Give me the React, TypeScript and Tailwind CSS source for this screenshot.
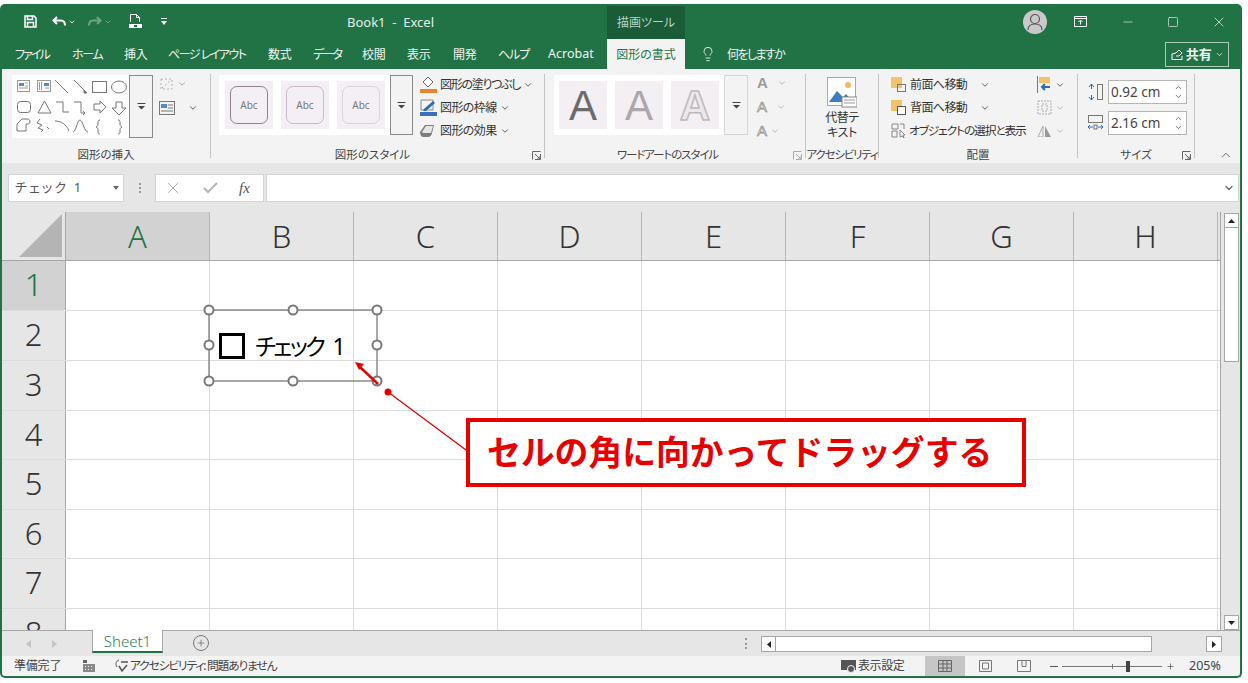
import type { ReactNode } from "react";
import { ChevronDown, ChevronUp, Lightbulb, Minus, Plus, Square, X } from "lucide-react";

const UI_FONT = "font-['Noto_Sans','Noto_Sans_CJK_JP',sans-serif] [font-feature-settings:'palt']";

const TABS = [
  { label: "ファイル", w: "w-[57px] tracking-[-1.9px]" },
  { label: "ホーム", w: "w-[52px] tracking-[-1.4px]" },
  { label: "挿入", w: "w-[44px] tracking-[-0.2px]" },
  { label: "ページ レイアウト", w: "w-[100px] tracking-[-1.500px]" },
  { label: "数式", w: "w-[45px] tracking-[-0.2px]" },
  { label: "データ", w: "w-[49px] tracking-[-1.7px]" },
  { label: "校閲", w: "w-[45px] tracking-[-0.2px]" },
  { label: "表示", w: "w-[46px] tracking-[-0.2px]" },
  { label: "開発", w: "w-[45px] tracking-[-0.2px]" },
  { label: "ヘルプ", w: "w-[50px] tracking-[-1.1px]" },
  { label: "Acrobat", w: "w-[59px] text-[12.500px]" },
];

const COLUMNS = ["B", "C", "D", "E", "F", "G", "H"];
const ROWS = [
  { n: "1", h: "h-[50px]" },
  { n: "2", h: "h-[50px]" },
  { n: "3", h: "h-[50px]" },
  { n: "4", h: "h-[49px]" },
  { n: "5", h: "h-[50px]" },
  { n: "6", h: "h-[49px]" },
  { n: "7", h: "h-[50px]" },
  { n: "8", h: "h-[50px]" },
];

function Caret({ className = "" }: { className?: string }) {
  return <ChevronDown className={`h-[10px] w-[10px] text-[#444] ${className}`} strokeWidth={2} />;
}

function MoreButton({ className }: { className: string }) {
  return (
    <div className={`flex items-center justify-center ${className}`}>
      <svg width="9" height="7" viewBox="0 0 9 7">
        <path d="M0.5 0.5h8" stroke="#444" />
        <path d="M1 3h7L4.500 6.500z" fill="#444" />
      </svg>
    </div>
  );
}

function Launcher({ dim }: { dim?: boolean }) {
  return (
    <svg className={`absolute bottom-[3px] right-[3px] ${dim ? "opacity-50" : ""}`} width="9" height="9" viewBox="0 0 9 9" fill="none" stroke="#666">
      <path d="M0.500 8.500v-8h8M8.500 3v5.500H3M3 3l5 5M5 8h3V5" />
    </svg>
  );
}

function Group({ w, label, labelClass = "", launcher, dim, children }: { w: string; label: string; labelClass?: string; launcher?: boolean; dim?: boolean; children: ReactNode }) {
  return (
    <div className={`relative flex shrink-0 flex-col ${w}`}>
      <div className="flex h-[76px]">{children}</div>
      <div className={`mt-[2px] whitespace-nowrap text-center text-[11.500px] leading-[16px] text-[#444] ${labelClass}`}>{label}</div>
      {launcher && <Launcher dim={dim} />}
    </div>
  );
}

function Sep() {
  return <div className="mb-[5px] mt-[5px] w-px shrink-0 bg-[#c4c4c4]" />;
}

function ShapeGallery() {
  return (
    <svg className="shrink-0" width="117" height="63" viewBox="0 0 117 63" fill="none" stroke="#777" strokeWidth="1">
      <rect x="5.500" y="5.500" width="12" height="11" stroke="#999" />
      <path d="M7 8h5v3H7z" fill="#4f8ccc" stroke="none" />
      <path d="M13 8h3M13 11h3M7 13h9" stroke="#999" />
      <rect x="25.500" y="5.500" width="13" height="11" stroke="#999" />
      <path d="M32 8h5v3h-5z" fill="#4f8ccc" stroke="none" />
      <path d="M27.500 7v8M29.500 7v8M33 13h4" stroke="#999" />
      <path d="M43 5l13 13" />
      <path d="M62 5l12 12" />
      <path d="M72 15l3 3-3 0z" fill="#555" />
      <rect x="80.500" y="6.500" width="14" height="11" />
      <ellipse cx="107" cy="12" rx="7.500" ry="6" />
      <rect x="5.500" y="26.500" width="13" height="11" rx="3" />
      <path d="M26 38l6.500-12L39 38z" />
      <path d="M44 27h7v10h6" />
      <path d="M62 27h7v11h4M71 36l2 2-2 2" />
      <path d="M82 29h6v-3l6 6-6 6v-3h-6z" />
      <path d="M104 27h6v6h4l-7 7-7-7h4z" />
      <path d="M5 56v-7l5-5h5c2 0 3 1 3 3s-2 2-4 2v7z" />
      <path d="M28 44l-3 4 5 2-4 3 5 2-2 2M35 52l2 2" />
      <path d="M43 46c6 0 11 3 14 10" />
      <path d="M61 57c3 0 4-12 7-12s4 12 8 12" />
      <path d="M88 45c-2 0-2 1-2 3s0 3-2 4c2 1 2 2 2 4s0 3 2 3" />
      <path d="M106 45c2 0 2 1 2 3s0 3 2 4c-2 1-2 2-2 4s0 3-2 3" />
    </svg>
  );
}

function StyleSwatch({ border }: { border: string }) {
  return (
    <div className="flex h-[48px] w-[48px] items-center justify-center bg-[#f4eff4]">
      <div className={`flex h-[38px] w-[38px] items-center justify-center rounded-[7px] border-[1.500px] text-[10px] text-[#777] ${border}`}>
        Abc
      </div>
    </div>
  );
}

function ListItem({ icon, label, tracking = "tracking-[-0.6px]" }: { icon: ReactNode; label: string; tracking?: string }) {
  return (
    <div className="flex h-[23px] items-center">
      <div className="flex w-[20px] shrink-0 items-center">{icon}</div>
      <span className={`text-[12px] text-[#333] ${tracking}`}>{label}</span>
      <Caret className="ml-[3px]" />
    </div>
  );
}

function SpinBox({ value }: { value: string }) {
  return (
    <div className="flex h-[24px] w-[79px] items-center border border-[#b5b5b5] bg-white pl-[2px] text-[13.500px] text-[#444]">
      <span className="flex-1">{value}</span>
      <div className="flex w-[16px] flex-col items-center">
        <ChevronUp className="h-[9px] w-[9px] text-[#444]" strokeWidth={2} />
        <ChevronDown className="h-[9px] w-[9px] text-[#444]" strokeWidth={2} />
      </div>
    </div>
  );
}

function Ribbon() {
  return (
    <div className="flex h-[94px] shrink-0 bg-[#f3f3f3] text-[#444]">
      <Group w="w-[208px]" label="図形の挿入">
        <div className="ml-[10px] mt-[6px] flex h-[63px] w-[141px] bg-white">
          <ShapeGallery />
          <MoreButton className="w-[24px] border border-[#8a8a8a] bg-[#f3f3f3]" />
        </div>
        <div className="ml-[6px] mt-[6px] flex flex-col gap-[7px]">
          <div className="flex h-[17px] items-center gap-[2px] opacity-50">
            <svg width="16" height="15" viewBox="0 0 16 15" fill="none" stroke="#777" strokeDasharray="2 2">
              <path d="M2 3h11v10H2zM3 12l9-8" />
            </svg>
            <Caret />
          </div>
          <div className="flex h-[17px] items-center gap-[13px]">
            <svg width="16" height="14" viewBox="0 0 16 14" fill="none" stroke="#777">
              <rect x="0.500" y="0.500" width="15" height="13" />
              <path d="M2 3h6v4H2z" fill="#4f8ccc" stroke="none" />
              <path d="M9 4h5M9 7h5M2 10h12" />
            </svg>
            <Caret />
          </div>
        </div>
      </Group>
      <Sep />
      <Group w="w-[333px]" label="図形のスタイル" labelClass="pr-[10px]" launcher>
        <div className="ml-[8px] mt-[6px] flex h-[60px] w-[194px]">
          <div className="flex flex-1 items-center gap-[8px] bg-white pl-[6px]">
            <StyleSwatch border="border-[#8f8490]" />
            <StyleSwatch border="border-[#c9bdc9]" />
            <StyleSwatch border="border-[#dcd3dc]" />
          </div>
          <MoreButton className="w-[23px] border border-[#8a8a8a] bg-[#f3f3f3]" />
        </div>
        <div className="ml-[7px] mt-[4px] flex flex-col">
          <ListItem
            label="図形の塗りつぶし"
            tracking="tracking-[-1.3px]"
            icon={
              <svg width="17" height="17" viewBox="0 0 17 17" fill="none">
                <path d="M8 1l5 5-5 5-5-5z" fill="#fff" stroke="#666" />
                <rect x="0" y="13" width="17" height="4" fill="#e8842c" />
              </svg>
            }
          />
          <ListItem
            label="図形の枠線"
            icon={
              <svg width="17" height="17" viewBox="0 0 17 17" fill="none">
                <path d="M1 1h12v10H1z" stroke="#888" />
                <path d="M4 10l9-8 2 2-9 8H3z" fill="#2b6cb8" />
                <rect x="0" y="13" width="17" height="4" fill="#3a6fc0" />
              </svg>
            }
          />
          <ListItem
            label="図形の効果"
            icon={
              <svg width="15" height="13" viewBox="0 0 15 13">
                <path d="M0 8l5-7h9l-2 8c0 2-2 4-4 4H3c-2 0-3-3-3-5z" fill="#7d7d7d" />
                <path d="M2 8l4-6h7l-2 7H3z" fill="#e6e6e6" />
              </svg>
            }
          />
        </div>
      </Group>
      <Sep />
      <Group w="w-[260px]" label="ワードアートのスタイル" labelClass="pr-[15px] tracking-[-1.1px]" launcher dim>
        <div className="ml-[9px] mt-[6px] flex h-[60px] w-[194px]">
          <div className="flex w-[170px] items-center gap-[8px] bg-white pl-[5px]">
            <div className="flex h-[48px] w-[48px] items-center justify-center bg-[#f3eff3] font-['Liberation_Sans',sans-serif] text-[42px] text-[#6d6a6d]">A</div>
            <div className="flex h-[48px] w-[48px] items-center justify-center bg-[#f3eff3] font-['Liberation_Sans',sans-serif] text-[42px] text-[#aba7ab]">A</div>
            <div className="flex h-[48px] w-[48px] items-center justify-center bg-[#f3eff3] font-['Liberation_Sans',sans-serif] text-[42px] font-bold text-[#ece8ec] [-webkit-text-stroke:1.500px_#bdb9bd]">A</div>
          </div>
          <MoreButton className="w-[24px] border border-[#d6d6d6] bg-[#f3f3f3]" />
        </div>
        <div className="ml-[9px] mt-[2px] flex w-[30px] flex-col font-['Liberation_Sans',sans-serif]">
          <div className="flex h-[24px] items-center gap-[9px] text-[15px] font-bold text-[#9a9a9a]">A<Caret className="opacity-40" /></div>
          <div className="flex h-[24px] items-center gap-[9px] text-[15px] text-[#f3f3f3] [-webkit-text-stroke:0.700px_#8f8f8f]">A<Caret className="opacity-40" /></div>
          <div className="flex h-[24px] items-center gap-[3px] text-[15px] text-[#f3f3f3] [-webkit-text-stroke:0.700px_#8f8f8f]">A<Caret className="opacity-40" /></div>
        </div>
      </Group>
      <Sep />
      <Group w="w-[72px]" label="アクセシビリティ" labelClass="tracking-[-1.2px]">
        <div className="flex w-full flex-col items-center pt-[8px]">
          <svg width="30" height="31" viewBox="0 0 30 31" fill="none">
            <rect x="0.500" y="0.500" width="28" height="28" fill="#fff" stroke="#a8a8a8" />
            <circle cx="21" cy="8" r="3" fill="#f0b860" />
            <path d="M2 25l8-11 6 6 3-3 7 8z" fill="#3f7cc0" />
            <rect x="15" y="20" width="15" height="10" fill="#fff" stroke="#888" />
            <path d="M17 23h11M17 26h11" stroke="#999" />
          </svg>
          <div className="mt-[2px] text-center text-[12px] leading-[15px] tracking-[-0.4px] text-[#333]">代替テ<br />キスト</div>
        </div>
      </Group>
      <Sep />
      <Group w="w-[198px]" label="配置">
        <div className="ml-[12px] mt-[4px] flex flex-col">
          <div className="flex h-[23px] items-center">
            <svg width="17" height="16" viewBox="0 0 17 16" className="mr-[2px] shrink-0">
              <rect x="0" y="0" width="11" height="11" fill="#f4c26a" />
              <rect x="6.500" y="7.500" width="8" height="7" fill="none" stroke="#777" />
            </svg>
            <span className="w-[70px] text-[12px] tracking-[-0.6px] text-[#333]">前面へ移動</span>
            <Caret />
            <svg width="15" height="17" viewBox="0 0 15 17" className="ml-[47px] shrink-0">
              <path d="M0.500 0v17" stroke="#777" />
              <rect x="2" y="1" width="11" height="6" fill="#f4c26a" />
              <path d="M13 11H5M8 8l-3 3 3 3" stroke="#2b6cb8" strokeWidth="2" fill="none" />
            </svg>
            <Caret className="ml-[3px]" />
          </div>
          <div className="flex h-[23px] items-center">
            <svg width="17" height="16" viewBox="0 0 17 16" className="mr-[2px] shrink-0">
              <rect x="0" y="0" width="11" height="11" fill="#f4c26a" />
              <rect x="6.500" y="6.500" width="8" height="8" fill="#fff" stroke="#555" />
            </svg>
            <span className="w-[70px] text-[12px] tracking-[-0.6px] text-[#333]">背面へ移動</span>
            <Caret />
            <svg width="15" height="15" viewBox="0 0 15 15" fill="none" stroke="#aaa" strokeDasharray="2 1" className="ml-[47px] shrink-0">
              <path d="M1 1h13v13H1zM5 4h5v7H5z" />
            </svg>
            <Caret className="ml-[3px] opacity-40" />
          </div>
          <div className="flex h-[23px] items-center">
            <svg width="15" height="15" viewBox="0 0 15 15" fill="none" stroke="#888" className="mr-[3px] shrink-0">
              <path d="M1 1h6v5H1zM1 8h5v6H1zM9 1h4v5" />
              <path d="M9 7l5 5-2 0 1 3-2-2-2 1z" fill="#f3f3f3" />
            </svg>
            <span className="w-[116px] whitespace-nowrap text-[11.800px] tracking-[-1.2px] text-[#333]">オブジェクトの選択と表示</span>
            <svg width="15" height="12" viewBox="0 0 15 12" className="ml-[12px] shrink-0">
              <path d="M1 12l5-11v11z" fill="none" stroke="#aaa" />
              <path d="M8 12V1l6 11z" fill="#999" />
            </svg>
            <Caret className="ml-[3px] opacity-40" />
          </div>
        </div>
      </Group>
      <Sep />
      <Group w="w-[116px]" label="サイズ" launcher>
        <div className="ml-[10px] mt-[11px] flex flex-col gap-[7px]">
          <div className="flex items-center gap-[5px]">
            <svg width="15" height="16" viewBox="0 0 15 16" fill="none" className="shrink-0">
              <path d="M3.500 0v5M3.500 11v5M1 3l2.500-3L6 3M1 13l2.500 3L6 13" stroke="#2b6cb8" />
              <rect x="9.500" y="0.500" width="5" height="15" stroke="#777" />
            </svg>
            <SpinBox value="0.92 cm" />
          </div>
          <div className="flex items-center gap-[5px]">
            <svg width="15" height="16" viewBox="0 0 15 16" fill="none" className="shrink-0">
              <rect x="0.500" y="0.500" width="14" height="7" stroke="#777" />
              <path d="M0 12h5M10 12h5M2 10l-2 2 2 2M13 10l2 2-2 2" stroke="#2b6cb8" />
              <rect x="6" y="10" width="3" height="4" stroke="#777" />
            </svg>
            <SpinBox value="2.16 cm" />
          </div>
        </div>
      </Group>
      <Sep />
      <div className="flex flex-1 items-end justify-end pb-[1px] pr-[7px]">
        <ChevronUp className="h-[14px] w-[14px] text-[#555]" strokeWidth={1.500} />
      </div>
    </div>
  );
}

function TitleBar() {
  return (
    <div className="flex h-[35px] shrink-0 items-center text-white">
      <svg className="ml-[22px] shrink-0" width="13" height="13" viewBox="0 0 13 13" fill="none" stroke="#fff" strokeWidth="1.500">
        <path d="M1 1h9l2 2v9H1zM3.500 1v3.500h5V1M3.500 12V7.500h6V12" />
      </svg>
      <svg className="ml-[15px] shrink-0" width="14" height="11" viewBox="0 0 14 11" fill="none" stroke="#fff" strokeWidth="2">
        <path d="M5 1L1.500 4.500 5 8M2 4.500h7c2.500 0 4 1.500 4 5" />
      </svg>
      <ChevronDown className="ml-[2px] h-[8px] w-[8px]" strokeWidth={2.500} />
      <svg className="ml-[12px] shrink-0 opacity-35" width="14" height="11" viewBox="0 0 14 11" fill="none" stroke="#fff" strokeWidth="2">
        <path d="M9 1l3.500 3.500L9 8M12 4.500H5c-2.500 0-4 1.500-4 5" />
      </svg>
      <ChevronDown className="ml-[2px] h-[8px] w-[8px] opacity-35" strokeWidth={2.500} />
      <svg className="ml-[17px] shrink-0" width="13" height="15" viewBox="0 0 13 15" fill="none" stroke="#fff">
        <path d="M1.500 8V0.500h6l3 3V8M7.500 0.500v3h3" />
        <path d="M0 10h13v4H0z" fill="#fff" stroke="none" />
        <path d="M5 11h3v2H5z" fill="#217346" stroke="none" />
      </svg>
      <svg className="ml-[19px] shrink-0" width="6" height="7" viewBox="0 0 6 7" fill="#fff">
        <path d="M0 0h6v1H0zM0 3h6L3 7z" />
      </svg>
      <div className="ml-[180px] mt-[3px] w-[90px] whitespace-nowrap text-[13px] text-[#e6f0ea]">Book1&nbsp; -&nbsp; Excel</div>
      <div className="ml-[170px] flex h-[33px] w-[78px] items-center justify-center self-end bg-[#1a5c38] text-[12px] text-[#b9d3c4]">描画ツール</div>
      <div className="ml-[338px] flex h-[24px] w-[24px] shrink-0 items-center justify-center overflow-hidden rounded-full bg-[#c9c9c9]">
        <svg width="16" height="18" viewBox="0 0 16 18" fill="none" stroke="#555" strokeWidth="1.200">
          <circle cx="8" cy="6" r="4.500" />
          <path d="M1 17c0-4 3-6 7-6s7 2 7 6" />
        </svg>
      </div>
      <svg className="ml-[27px] shrink-0" width="13" height="11" viewBox="0 0 13 11" fill="none" stroke="#fff">
        <path d="M0.500 0.500h12v10H0.500zM0.500 2.500h12M6.500 8.500V4.500M4.500 6l2-2 2 2" />
      </svg>
      <Minus className="ml-[34px] h-[14px] w-[14px]" strokeWidth={1} />
      <Square className="ml-[32px] h-[12px] w-[12px]" strokeWidth={1.200} />
      <X className="ml-[32px] h-[16px] w-[16px]" strokeWidth={1} />
    </div>
  );
}

function TabBar() {
  return (
    <div className="flex h-[30px] shrink-0 items-center text-[12px] text-[#f0f5f2]">
      <div className="w-[13px]" />
      {TABS.map((t) => (
        <div key={t.label} className={`${t.w} mt-[1px] whitespace-nowrap`}>
          {t.label}
        </div>
      ))}
      <div className="flex h-full w-[78px] items-center justify-center bg-[#f3f3f3] pt-[1px] text-[#217346]">図形の書式</div>
      <Lightbulb className="ml-[15px] h-[16px] w-[16px]" strokeWidth={1.300} />
      <div className="ml-[11px] mt-[1px] tracking-[-1.6px]">何をしますか</div>
      <div className="ml-[381px] mt-[1px] flex h-[25px] w-[64px] items-center justify-center gap-[3px] border border-[#a9cbb8] text-[13px] font-bold">
        <svg width="12" height="11" viewBox="0 0 12 11" fill="none" stroke="#fff">
          <path d="M1 10.500V5l4-1 3-3 3 3-3 3H5M1 10.500h10V7" />
        </svg>
        共有
        <ChevronDown className="h-[9px] w-[9px]" strokeWidth={2} />
      </div>
    </div>
  );
}

function FormulaBar() {
  return (
    <div className="flex h-[49px] shrink-0 items-start bg-[#e6e6e6] pl-[6px] pt-[11px]">
      <div className="flex h-[28px] w-[116px] items-center border border-[#d4d4d4] bg-white pl-[6px] text-[13px] tracking-[2.2px] text-[#555]">
        <span className="flex-1">チェック 1</span>
        <svg className="mr-[4px]" width="6" height="4" viewBox="0 0 6 4" fill="#666"><path d="M0 0h6L3 4z" /></svg>
      </div>
      <div className="flex h-[28px] w-[31px] flex-col items-center justify-center gap-[2px]">
        <div className="h-[2px] w-[2px] bg-[#999]" />
        <div className="h-[2px] w-[2px] bg-[#999]" />
        <div className="h-[2px] w-[2px] bg-[#999]" />
      </div>
      <div className="flex h-[28px] w-[109px] items-center border border-[#d4d4d4] bg-white pl-[8px]">
        <X className="h-[18px] w-[18px] text-[#a8a8a8]" strokeWidth={1.300} />
        <svg className="ml-[21px]" width="15" height="12" viewBox="0 0 15 12" fill="none" stroke="#b5b5b5" strokeWidth="2">
          <path d="M1 6l4 4 9-9" />
        </svg>
        <span className="ml-[21px] font-['Liberation_Serif',serif] text-[15px] italic text-[#555]">fx</span>
      </div>
      <div className="ml-[2px] flex h-[28px] w-[973px] items-center justify-end border border-[#d4d4d4] bg-white pr-[3px]">
        <ChevronDown className="h-[12px] w-[12px] text-[#666]" strokeWidth={2.500} />
      </div>
    </div>
  );
}

function SheetGrid() {
  return (
    <div className="relative flex h-[418px] shrink-0 bg-[#e6e6e6]">
      <div className="flex h-full w-[1219px] shrink-0 flex-col overflow-hidden border-r border-[#a6a6a6] bg-white">
        <div className="flex h-[49px] shrink-0 border-b border-[#a6a6a6] bg-[#e6e6e6] font-['Noto_Sans',sans-serif] text-[31px] font-light text-[#333]">
          <div className="flex w-[64px] shrink-0 items-end justify-end border-r border-[#a6a6a6] pb-[3px] pr-[3px]">
            <div className="h-[43px] w-[43px] bg-[#b4b4b4] [clip-path:polygon(100%_0,100%_100%,0_100%)]" />
          </div>
          <div className="flex w-[144px] shrink-0 items-center justify-center border-r border-[#b5b5b5] bg-[#d2d2d2] text-[#217346]">A</div>
          {COLUMNS.map((c) => (
            <div key={c} className="flex w-[144px] shrink-0 items-center justify-center border-r border-[#b5b5b5]">
              {c}
            </div>
          ))}
        </div>
        {ROWS.map((r) => (
          <div key={r.n} className={`flex shrink-0 border-b border-[#dcdcdc] ${r.h}`}>
            <div
              className={`flex w-[64px] shrink-0 items-center justify-center border-r border-[#a6a6a6] pb-[2px] font-['Noto_Sans',sans-serif] text-[31px] font-light ${
                r.n === "1" ? "bg-[#d2d2d2] text-[#217346]" : "bg-[#e6e6e6] text-[#333]"
              }`}
            >
              {r.n}
            </div>
            <div className="w-[144px] shrink-0 border-r border-[#dcdcdc]" />
            {COLUMNS.map((c) => (
              <div key={c} className="w-[144px] shrink-0 border-r border-[#dcdcdc]" />
            ))}
          </div>
        ))}
      </div>
      <div className="ml-[3px] flex w-[15px] flex-col pt-[1px]">
        <div className="flex h-[15px] items-center justify-center border border-[#a6a6a6] bg-white">
          <svg width="7" height="4" viewBox="0 0 7 4"><path d="M0 4h7L3.500 0z" fill="#222" /></svg>
        </div>
        <div className="h-[134px] border-x border-b border-[#a6a6a6] bg-white" />
        <div className="flex-1" />
        <div className="flex h-[15px] items-center justify-center border border-[#a6a6a6] bg-white">
          <svg width="7" height="4" viewBox="0 0 7 4"><path d="M0 0h7L3.500 4z" fill="#222" /></svg>
        </div>
      </div>
    </div>
  );
}

function Overlays() {
  return (
    <>
      <svg className="absolute left-0 top-0" width="1242" height="678" viewBox="0 0 1242 678" fill="none">
        <rect x="209" y="310" width="168" height="71" stroke="#7a7a7a" strokeWidth="1.300" />
        {[
          [209, 310],
          [293, 310],
          [377, 310],
          [209, 345],
          [377, 345],
          [209, 381],
          [293, 381],
          [377, 381],
        ].map(([cx, cy]) => (
          <circle key={`${cx}-${cy}`} cx={cx} cy={cy} r="4.500" fill="#fff" stroke="#777" strokeWidth="2" />
        ))}
        <path d="M378 384L360 367" stroke="#e60000" strokeWidth="2.500" />
        <path d="M355 362l9 2-5 6z" fill="#e60000" />
        <circle cx="388" cy="392" r="3.500" fill="#e60000" />
        <path d="M388 392L466 450" stroke="#e60000" strokeWidth="1.300" />
      </svg>
      <div className="absolute left-[219px] top-[333px] h-[26px] w-[26px] border-[3px] border-black bg-white" />
      <div className="absolute left-[255px] top-[329px] whitespace-nowrap text-[23px] leading-[34px] tracking-[-2.600px] text-black [word-spacing:6px]">チェック 1</div>
      <div className="absolute left-[466px] top-[418px] flex h-[69px] w-[560px] items-center border-[4px] border-[#e60000] bg-white pl-[17px] text-[33.800px] font-bold leading-none text-[#e60000] [font-feature-settings:normal]">
        セルの角に向かってドラッグする
      </div>
    </>
  );
}

function SheetTabs() {
  return (
    <div className="flex h-[26px] shrink-0 items-start border-t border-[#a6a6a6] bg-[#e6e6e6]">
      <div className="flex h-[25px] w-[90px] items-center pl-[24px]">
        <svg width="5" height="8" viewBox="0 0 5 8"><path d="M5 0v8L0 4z" fill="#c4c4c4" /></svg>
        <svg className="ml-[21px]" width="5" height="8" viewBox="0 0 5 8"><path d="M0 0v8l5-4z" fill="#c4c4c4" /></svg>
      </div>
      <div className="-mt-px flex h-[23px] w-[71px] items-center justify-center border-x border-b-2 border-x-[#a6a6a6] border-b-[#217346] bg-white pt-[1px] text-[15px] font-light text-[#2f8058]">
        Sheet1
      </div>
      <div className="ml-[30px] mt-[4px] flex h-[16px] w-[16px] items-center justify-center rounded-full border border-[#777]">
        <Plus className="h-[10px] w-[10px] text-[#555]" strokeWidth={1.500} />
      </div>
      <div className="ml-[536px] mt-[7px] flex h-[11px] flex-col justify-between">
        <div className="h-[2px] w-[2px] bg-[#999]" />
        <div className="h-[2px] w-[2px] bg-[#999]" />
        <div className="h-[2px] w-[2px] bg-[#999]" />
      </div>
      <div className="ml-[14px] mt-[5px] flex h-[16px] w-[461px] items-stretch">
        <div className="flex w-[15px] items-center justify-center border border-[#a6a6a6] bg-white">
          <svg width="4" height="7" viewBox="0 0 4 7"><path d="M4 0v7L0 3.500z" fill="#222" /></svg>
        </div>
        <div className="w-[376px] border-y border-r border-[#a6a6a6] bg-white" />
        <div className="flex-1" />
        <div className="flex w-[16px] items-center justify-center border border-[#a6a6a6] bg-white">
          <svg width="4" height="7" viewBox="0 0 4 7"><path d="M0 0v7l4-3.500z" fill="#222" /></svg>
        </div>
      </div>
    </div>
  );
}

function StatusBar() {
  return (
    <div className="flex h-[20px] shrink-0 items-center bg-[#f3f3f3] text-[12px] text-[#444]">
      <span className="ml-[12px] w-[69px] tracking-[-0.2px]">準備完了</span>
      <svg className="shrink-0" width="12" height="12" viewBox="0 0 12 12" fill="#666">
        <rect x="0" y="0" width="4" height="3" />
        <path d="M0 4h12v8H0z" fill="#888" />
        <path d="M2 6h1v1H2zM5 6h1v1H5zM8 6h1v1H8zM2 9h1v1H2zM5 9h1v1H5zM8 9h1v1H8z" fill="#f3f3f3" />
      </svg>
      <svg className="ml-[19px] shrink-0" width="15" height="14" viewBox="0 0 15 14" fill="none" stroke="#555">
        <path d="M5 1C2 2 1 5 3 8" />
        <path d="M7 3h7M5 7l3 5 5-6" strokeWidth="1.500" />
      </svg>
      <span className="ml-[1px] w-[711px] whitespace-nowrap text-[11.800px] tracking-[-1.2px]">アクセシビリティ: 問題ありません</span>
      <svg className="shrink-0" width="16" height="13" viewBox="0 0 16 13">
        <rect x="0" y="0" width="15" height="10" fill="#555" />
        <circle cx="10" cy="9" r="3.500" fill="#555" stroke="#f3f3f3" />
      </svg>
      <span className="ml-[1px] w-[67px] text-[12px] tracking-[-0.4px]">表示設定</span>
      <div className="flex h-full w-[40px] items-center justify-center bg-[#c6c6c6]">
        <svg width="14" height="12" viewBox="0 0 14 12" fill="none" stroke="#666">
          <path d="M0.500 0.500h13v11h-13zM0.500 4h13M0.500 8h13M5 0.500v11M9 0.500v11" />
        </svg>
      </div>
      <div className="flex w-[40px] justify-center">
        <svg width="13" height="12" viewBox="0 0 13 12" fill="none" stroke="#777">
          <path d="M0.500 0.500h12v11h-12zM3.500 3h6v6h-6z" />
        </svg>
      </div>
      <div className="flex w-[38px] justify-center">
        <svg width="14" height="12" viewBox="0 0 14 12" fill="none" stroke="#777">
          <path d="M0.500 0.500h13v11h-13zM5 0.500v6h4v-6" />
        </svg>
      </div>
      <div className="ml-[7px] h-px w-[8px] bg-[#555]" />
      <div className="relative ml-[4px] h-px w-[100px] bg-[#777]">
        <div className="absolute left-[50px] top-[-2px] h-[5px] w-px bg-[#777]" />
        <div className="absolute left-[64px] top-[-5px] h-[11px] w-[4px] bg-[#444]" />
      </div>
      <Plus className="ml-[4px] h-[9px] w-[9px] text-[#555]" strokeWidth={2} />
      <span className="ml-[14px] text-[12.500px]">205%</span>
    </div>
  );
}

export default function App() {
  return (
    <div className={`h-[683px] w-[1248px] overflow-hidden bg-white pt-[4px] ${UI_FONT}`}>
      <div className="relative flex h-[674px] w-[1242px] flex-col overflow-hidden rounded-[5px] border-x-2 border-b-2 border-[#217346] bg-[#217346]">
        <TitleBar />
        <TabBar />
        <Ribbon />
        <FormulaBar />
        <SheetGrid />
        <SheetTabs />
        <StatusBar />
        <div className="absolute -left-[2px] -top-[4px]">
          <Overlays />
        </div>
      </div>
    </div>
  );
}
